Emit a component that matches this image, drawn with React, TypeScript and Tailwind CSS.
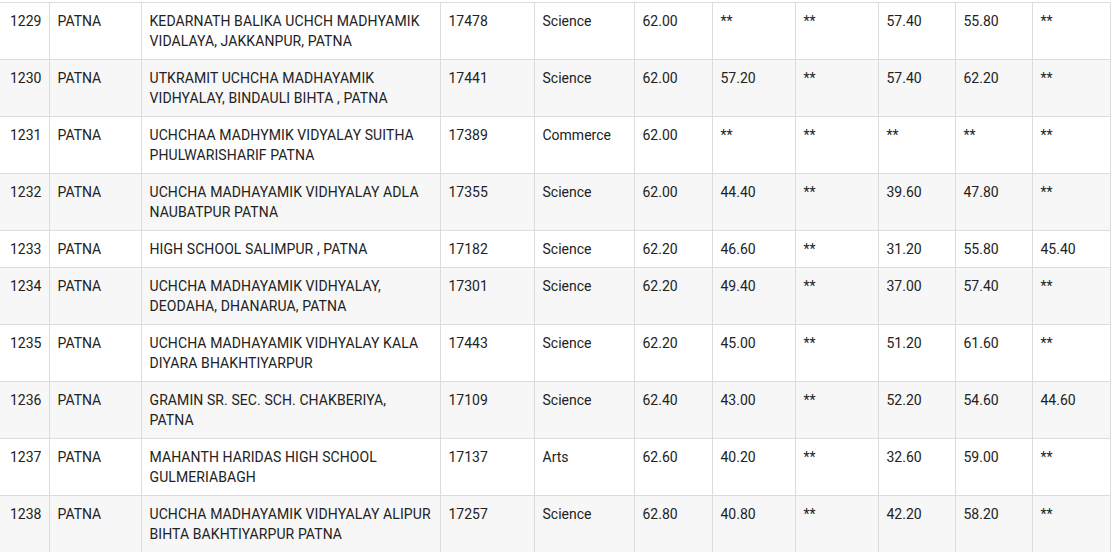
import React from 'react';

// Result rows: sr. no, district, school, code, stream, then six score columns
type Row = [string, string, string, string, string, string, string, string, string, string, string];

const rows: Row[] = [
  ['1229', 'PATNA', 'KEDARNATH BALIKA UCHCH MADHYAMIK VIDALAYA, JAKKANPUR, PATNA', '17478', 'Science', '62.00', '**', '**', '57.40', '55.80', '**'],
  ['1230', 'PATNA', 'UTKRAMIT UCHCHA MADHAYAMIK VIDHYALAY, BINDAULI BIHTA , PATNA', '17441', 'Science', '62.00', '57.20', '**', '57.40', '62.20', '**'],
  ['1231', 'PATNA', 'UCHCHAA MADHYMIK VIDYALAY SUITHA PHULWARISHARIF PATNA', '17389', 'Commerce', '62.00', '**', '**', '**', '**', '**'],
  ['1232', 'PATNA', 'UCHCHA MADHAYAMIK VIDHYALAY ADLA NAUBATPUR PATNA', '17355', 'Science', '62.00', '44.40', '**', '39.60', '47.80', '**'],
  ['1233', 'PATNA', 'HIGH SCHOOL SALIMPUR , PATNA', '17182', 'Science', '62.20', '46.60', '**', '31.20', '55.80', '45.40'],
  ['1234', 'PATNA', 'UCHCHA MADHAYAMIK VIDHYALAY, DEODAHA, DHANARUA, PATNA', '17301', 'Science', '62.20', '49.40', '**', '37.00', '57.40', '**'],
  ['1235', 'PATNA', 'UCHCHA MADHAYAMIK VIDHYALAY KALA DIYARA BHAKHTIYARPUR', '17443', 'Science', '62.20', '45.00', '**', '51.20', '61.60', '**'],
  ['1236', 'PATNA', 'GRAMIN SR. SEC. SCH. CHAKBERIYA, PATNA', '17109', 'Science', '62.40', '43.00', '**', '52.20', '54.60', '44.60'],
  ['1237', 'PATNA', 'MAHANTH HARIDAS HIGH SCHOOL GULMERIABAGH', '17137', 'Arts', '62.60', '40.20', '**', '32.60', '59.00', '**'],
  ['1238', 'PATNA', 'UCHCHA MADHAYAMIK VIDHYALAY ALIPUR BIHTA BAKHTIYARPUR PATNA', '17257', 'Science', '62.80', '40.80', '**', '42.20', '58.20', '**'],
];

const widths = [49, 92, 299, 94, 100, 78, 83, 83, 77, 77, 78];

export default function App() {
  return (
    <div className="w-[1112px] h-[552px] overflow-hidden bg-white pt-[2px]" style={{ fontFamily: 'Roboto, "Liberation Sans", sans-serif' }}>
      <table className="table-fixed border-collapse w-[1110px] text-[14px] leading-[20px] text-[#222]">
        <colgroup>
          {widths.map((w, i) => (
            <col key={i} style={{ width: w }} />
          ))}
        </colgroup>
        <tbody>
          {rows.map((r, ri) => (
            <tr key={r[0]} className={ri % 2 === 1 ? 'bg-[#f7f7f7]' : 'bg-white'}>
              {r.map((cell, ci) => (
                <td
                  key={ci}
                  className={`align-top border border-[#dcdcdc] py-2 ${
                    ci === 0 ? 'border-l-0 pl-[10px] pr-1' : ci === 2 ? 'pl-2 pr-2 tracking-[0.09px]' : 'pl-2 pr-2'
                  }`}
                >
                  {cell}
                </td>
              ))}
            </tr>
          ))}
        </tbody>
      </table>
    </div>
  );
}
